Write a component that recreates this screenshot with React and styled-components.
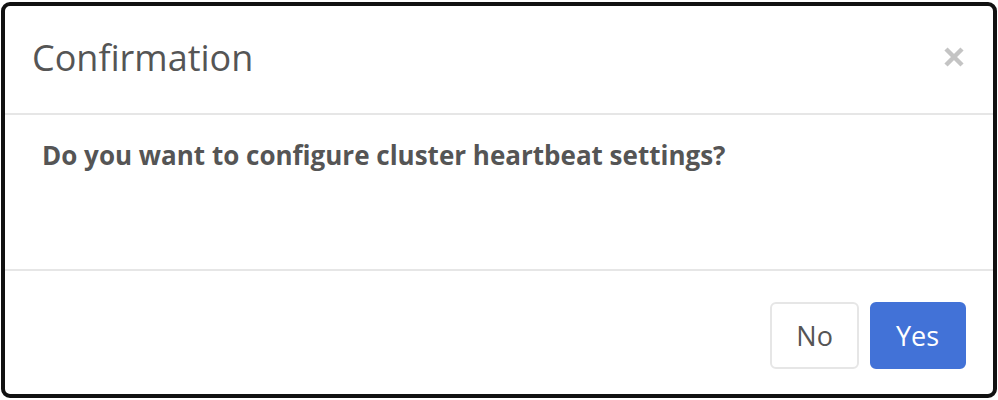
import React from "react";
import styled, { createGlobalStyle } from "styled-components";

const Global = createGlobalStyle`
  html, body { margin: 0; padding: 0; background: #fff; }
  body { font-family: "Open Sans", "Liberation Sans", sans-serif; }
  * { box-sizing: border-box; }
`;

const Frame = styled.div`
  margin: 2px 1px 2px 1px;
  height: 396px;
  border: 4px solid #111;
  border-radius: 9px;
  background: #fff;
  display: flex;
  flex-direction: column;
  overflow: hidden;
`;

const Header = styled.div`
  height: 109px;
  padding: 0 27px 0 27px;
  border-bottom: 2px solid #e6e6e6;
  display: flex;
  align-items: center;
  justify-content: space-between;
`;

const Title = styled.h4`
  margin: 0;
  font-size: 36px;
  font-weight: 400;
  color: #555;
  line-height: 1;
  padding-bottom: 4px;
`;

const Close = styled.button`
  border: none;
  background: none;
  padding: 0;
  width: 24px;
  height: 24px;
  display: flex;
  align-items: center;
  justify-content: center;
  cursor: pointer;
  margin-top: -6px;
`;

const Body = styled.div`
  height: 156px;
  padding: 21px 28px 0 37px;
  border-bottom: 2px solid #e6e6e6;
`;

const Message = styled.p`
  margin: 0;
  font-size: 26px;
  font-weight: 700;
  color: #555;
  line-height: 1.5;
`;

const Footer = styled.div`
  flex: 1;
  display: flex;
  justify-content: flex-end;
  align-items: flex-start;
  gap: 11px;
  padding: 31px 27px 0 0;
`;

const Button = styled.button`
  height: 67px;
  padding: ${(p) => (p.$primary ? "0 25px 0 24px" : "0 24px")};
  font-family: "Open Sans", "Liberation Sans", sans-serif;
  font-size: 27px;
  font-weight: 400;
  border-radius: 6px;
  border: 2px solid ${(p) => (p.$primary ? "#4272d7" : "#e6e6e6")};
  background: ${(p) => (p.$primary ? "#4272d7" : "#fff")};
  color: ${(p) => (p.$primary ? "#fff" : "#555")};
  cursor: pointer;
`;

export default function App() {
  return (
    <>
      <Global />
      <Frame>
        <Header>
          <Title>Confirmation</Title>
          <Close aria-label="Close">
            <svg width="22" height="22" viewBox="0 0 22 22">
              <path d="M3 3 L19 19 M19 3 L3 19" stroke="#c4c4c4" strokeWidth="4.5" strokeLinecap="butt" />
            </svg>
          </Close>
        </Header>
        <Body>
          <Message>Do you want to configure cluster heartbeat settings?</Message>
        </Body>
        <Footer>
          <Button>No</Button>
          <Button $primary>Yes</Button>
        </Footer>
      </Frame>
    </>
  );
}
